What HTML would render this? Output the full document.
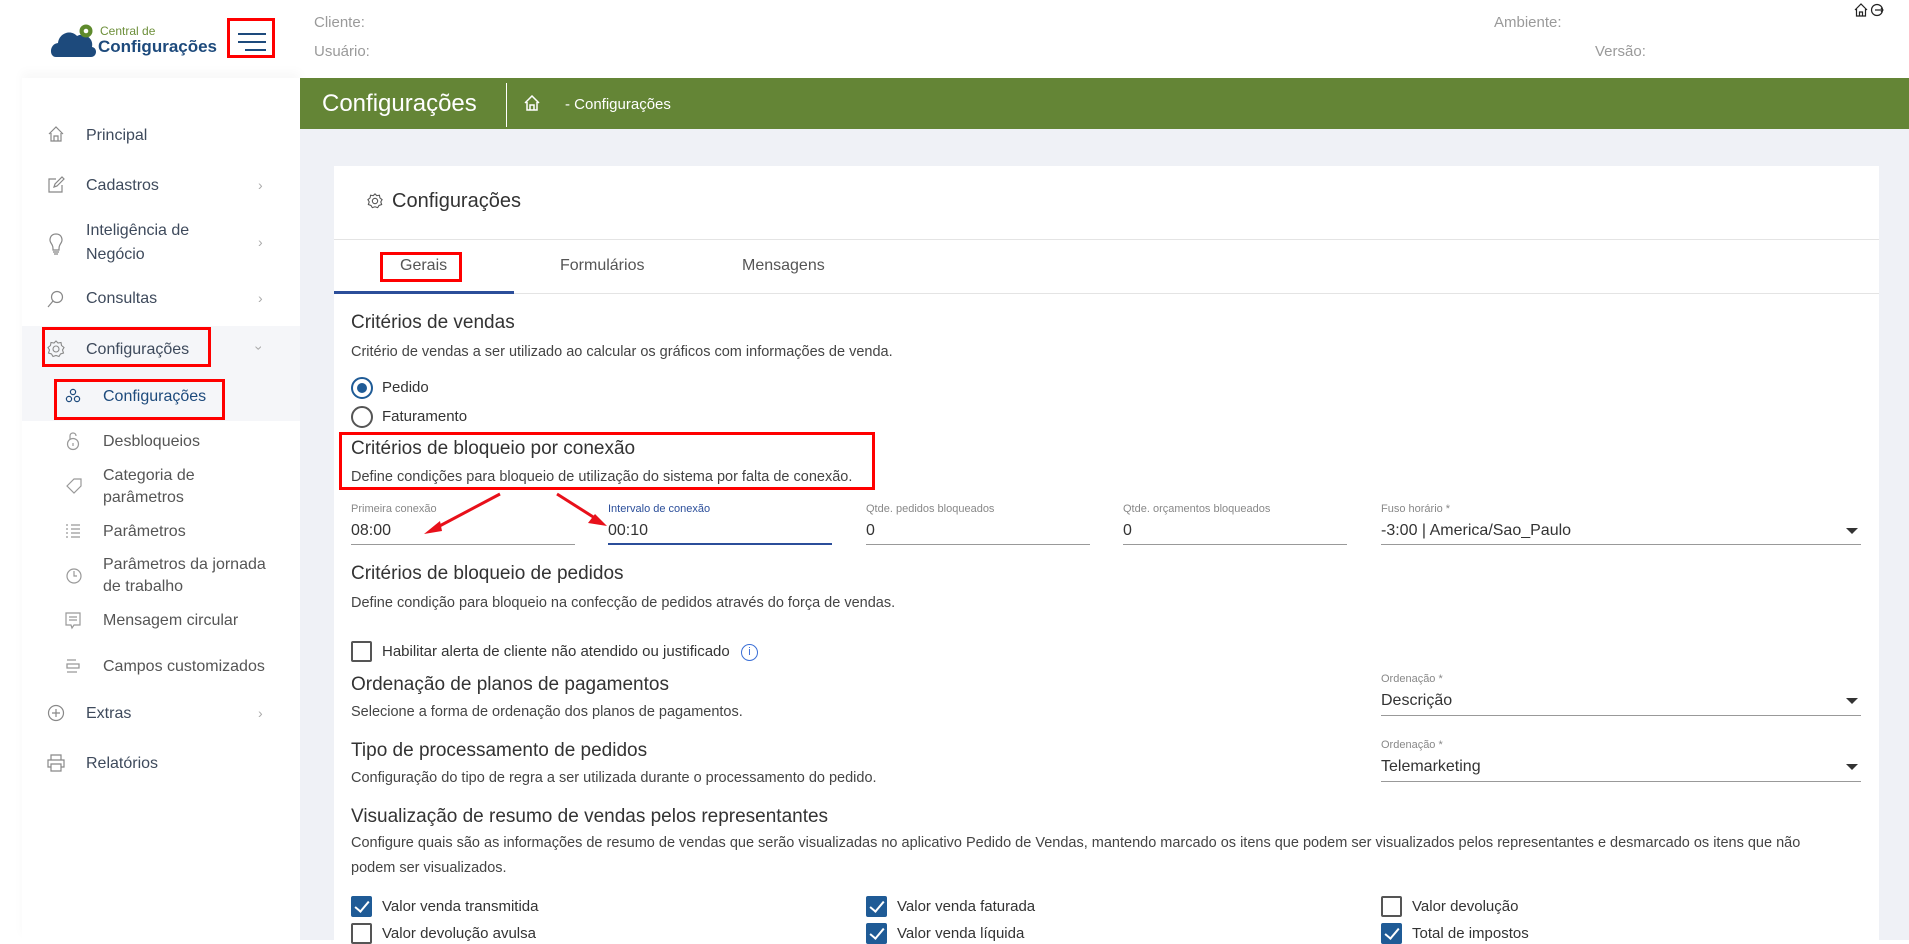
<!DOCTYPE html>
<html><head><meta charset="utf-8"><style>
*{box-sizing:border-box;margin:0;padding:0}
body{width:1909px;height:940px;overflow:hidden;background:#fff;font-family:"Liberation Sans",sans-serif;color:#3c4043;position:relative}
.a{position:absolute;white-space:nowrap}
.hdr{color:#9a9a9a;font-size:15px}
.side{position:absolute;left:22px;top:78px;width:278px;height:862px;background:#fff;box-shadow:0 -6px 10px rgba(0,0,0,.03)}
.si{font-size:16px;color:#3e4a5c}
.chev{color:#aaa;font-size:14px}
.main{position:absolute;left:300px;top:129px;width:1609px;height:811px;background:#eff1f6}
.green{position:absolute;left:300px;top:78px;width:1609px;height:51px;background:#648536}
.card{position:absolute;left:334px;top:166px;width:1545px;height:774px;background:#fff}
.t{font-size:19px;color:#333}
.d{font-size:14.5px;color:#444}
.lbl{font-size:11px;color:#888}
.val{font-size:16px;color:#333}
.line{position:absolute;height:1px;background:#999}
.red{position:absolute;border:3px solid #f00}
.cb{position:absolute;width:21px;height:21px;border:2px solid #555;border-radius:2px;background:#fff}
.cb.on{background:#1f5b96;border-color:#1f5b96}
.cb.on:after{content:"";position:absolute;left:5px;top:0px;width:6px;height:12px;border:solid #fff;border-width:0 2.5px 2.5px 0;transform:rotate(40deg)}
.cbl{font-size:15px;color:#333}
.arr{position:absolute;width:0;height:0;border-left:6px solid transparent;border-right:6px solid transparent;border-top:6px solid #333}
</style></head><body>
<svg class="a" style="left:49px;top:22px" width="50" height="36" viewBox="0 0 50 36"><path d="M7 35 C0 35 0 22 9 21 C10 11 22 7 28 14 C35 10 45 16 43 25 C49 26 48 35 42 35Z" fill="#1d4a7c"/><circle cx="37" cy="9" r="6.5" fill="#5e8a2c"/><circle cx="37" cy="9" r="2.3" fill="#fff"/></svg>
<div class="a" style="left:100px;top:24px;font-size:12px;color:#6d8f3a">Central de</div>
<div class="a" style="left:98px;top:37px;font-size:17px;font-weight:bold;color:#1d4a7c">Configurações</div>
<div class="red" style="left:227px;top:18px;width:48px;height:40px"></div>
<div class="a" style="left:238px;top:33px;width:28px;height:1.5px;background:#1d4a7c"></div>
<div class="a" style="left:238px;top:41px;width:28px;height:1.5px;background:#1d4a7c"></div>
<div class="a" style="left:245px;top:49px;width:21px;height:1.5px;background:#1d4a7c"></div>
<div class="a hdr" style="left:314px;top:14px">Cliente:</div>
<div class="a hdr" style="left:314px;top:43px">Usuário:</div>
<div class="a hdr" style="left:1494px;top:14px">Ambiente:</div>
<div class="a hdr" style="left:1595px;top:43px">Versão:</div>
<svg class="a" style="left:1853px;top:2px" width="34" height="16" viewBox="0 0 34 16"><path d="M2 8 L8 2 L14 8 M3.5 7 V14 H12.5 V7 M6.5 14 V10 H9.5 V14" fill="none" stroke="#222" stroke-width="1.2"/><circle cx="24" cy="8" r="5.5" fill="none" stroke="#222" stroke-width="1.2"/><path d="M22 8 H30 M28 6 L30 8 L28 10" fill="none" stroke="#222" stroke-width="1.2"/></svg>
<div class="side"></div>
<div class="a" style="left:22px;top:326px;width:278px;height:95px;background:#f5f6f9"></div>
<svg class="a" style="left:47px;top:125px" width="18" height="18" viewBox="0 0 18 18"><path d="M2 9 L9 2 L16 9 M4 8 V16 H14 V8 M7 16 V11 H11 V16" fill="none" stroke="#888" stroke-width="1.2"/></svg>
<div class="a si" style="left:86px;top:127px">Principal</div>
<svg class="a" style="left:47px;top:176px" width="18" height="18" viewBox="0 0 18 18"><path d="M9 3 H2 V16 H15 V9 M7 11 L8 8 L15 1 L17 3 L10 10Z" fill="none" stroke="#888" stroke-width="1.2"/></svg>
<div class="a si" style="left:86px;top:177px">Cadastros</div><div class="a chev" style="left:258px;top:177px">›</div>
<svg class="a" style="left:47px;top:232px" width="18" height="24" viewBox="0 0 18 24"><path d="M9 2 C3 2 2 8 4 11 C6 14 6 15 6 18 H12 C12 15 12 14 14 11 C16 8 15 2 9 2Z M6 20 H12 M7 22 H11" fill="none" stroke="#888" stroke-width="1.2"/></svg>
<div class="a si" style="left:86px;top:222px">Inteligência de</div>
<div class="a si" style="left:86px;top:246px">Negócio</div><div class="a chev" style="left:258px;top:234px">›</div>
<svg class="a" style="left:47px;top:290px" width="18" height="18" viewBox="0 0 18 18"><circle cx="10" cy="7" r="5.5" fill="none" stroke="#888" stroke-width="1.2"/><path d="M6 11 L1 17" stroke="#888" stroke-width="1.2"/></svg>
<div class="a si" style="left:86px;top:290px">Consultas</div><div class="a chev" style="left:258px;top:290px">›</div>
<div class="red" style="left:42px;top:327px;width:169px;height:40px"></div>
<svg class="a" style="left:47px;top:340px" width="18" height="18" viewBox="0 0 18 18"><circle cx="9" cy="9" r="3" fill="none" stroke="#888" stroke-width="1.1"/><path d="M9 1 L11 3 L14 2.5 L14.5 5.5 L17 7.5 L15.5 10 L16.5 13 L13.5 14 L12 16.5 L9 15.5 L6 16.5 L4.5 14 L1.5 13 L2.5 10 L1 7.5 L3.5 5.5 L4 2.5 L7 3Z" fill="none" stroke="#888" stroke-width="1.1"/></svg>
<div class="a si" style="left:86px;top:341px">Configurações</div><div class="a chev" style="left:257px;top:340px;transform:rotate(90deg)">›</div>
<div class="red" style="left:54px;top:379px;width:171px;height:41px"></div>
<svg class="a" style="left:65px;top:387px" width="16" height="18" viewBox="0 0 16 18"><circle cx="8" cy="5" r="2.6" fill="none" stroke="#1d4a7c" stroke-width="1.2"/><circle cx="4" cy="12" r="2.6" fill="none" stroke="#1d4a7c" stroke-width="1.2"/><circle cx="12" cy="12" r="2.6" fill="none" stroke="#1d4a7c" stroke-width="1.2"/></svg>
<div class="a si" style="left:103px;top:388px;color:#1d4a7c">Configurações</div>
<svg class="a" style="left:65px;top:431px" width="16" height="20" viewBox="0 0 16 20"><path d="M5 8 V5 C5 1 11 1 11 5" fill="none" stroke="#999" stroke-width="1.2"/><circle cx="8" cy="13" r="5.5" fill="none" stroke="#999" stroke-width="1.2"/><path d="M8 12 V15" stroke="#999" stroke-width="1.2"/></svg>
<div class="a si" style="left:103px;top:433px;color:#555">Desbloqueios</div>
<svg class="a" style="left:65px;top:477px" width="18" height="18" viewBox="0 0 18 18"><path d="M2 9 L9 2 H16 V9 L9 16Z" fill="none" stroke="#999" stroke-width="1.2"/></svg>
<div class="a si" style="left:103px;top:467px;color:#555">Categoria de</div>
<div class="a si" style="left:103px;top:489px;color:#555">parâmetros</div>
<svg class="a" style="left:65px;top:523px" width="16" height="16" viewBox="0 0 16 16"><path d="M1 2 H3 M6 2 H15 M1 6 H3 M6 6 H15 M1 10 H3 M6 10 H15 M1 14 H3 M6 14 H15" stroke="#999" stroke-width="1.3"/></svg>
<div class="a si" style="left:103px;top:523px;color:#555">Parâmetros</div>
<svg class="a" style="left:65px;top:567px" width="18" height="18" viewBox="0 0 18 18"><circle cx="9" cy="9" r="7" fill="none" stroke="#999" stroke-width="1.2"/><path d="M9 4 V9 H12" fill="none" stroke="#999" stroke-width="1.2"/></svg>
<div class="a si" style="left:103px;top:556px;color:#555">Parâmetros da jornada</div>
<div class="a si" style="left:103px;top:578px;color:#555">de trabalho</div>
<svg class="a" style="left:65px;top:612px" width="16" height="18" viewBox="0 0 16 18"><path d="M1 1 H15 V13 H9 L7 16 L6 13 H1Z M4 5 H12 M4 8 H12" fill="none" stroke="#999" stroke-width="1.2"/></svg>
<div class="a si" style="left:103px;top:612px;color:#555">Mensagem circular</div>
<svg class="a" style="left:65px;top:658px" width="16" height="18" viewBox="0 0 16 18"><path d="M2 2 H11 M2 6 H14 V10 H2Z M2 14 H12" fill="none" stroke="#999" stroke-width="1.3"/></svg>
<div class="a si" style="left:103px;top:658px;color:#555">Campos customizados</div>
<svg class="a" style="left:47px;top:704px" width="18" height="18" viewBox="0 0 18 18"><circle cx="9" cy="9" r="7.5" fill="none" stroke="#888" stroke-width="1.2"/><path d="M9 5 V13 M5 9 H13" stroke="#888" stroke-width="1.2"/></svg>
<div class="a si" style="left:86px;top:705px">Extras</div><div class="a chev" style="left:258px;top:705px">›</div>
<svg class="a" style="left:47px;top:754px" width="18" height="18" viewBox="0 0 18 18"><path d="M4 6 V1 H14 V6 M4 13 H1 V6 H17 V13 H14 M4 10 H14 V17 H4Z" fill="none" stroke="#888" stroke-width="1.2"/></svg>
<div class="a si" style="left:86px;top:755px">Relatórios</div>
<div class="main"></div>
<div class="green"></div>
<div class="a" style="left:322px;top:90px;font-size:24px;color:#fff">Configurações</div>
<div class="a" style="left:506px;top:83px;width:1px;height:44px;background:#fff"></div>
<svg class="a" style="left:524px;top:95px" width="16" height="16" viewBox="0 0 16 16"><path d="M1 8 L8 1 L15 8 M3 7 V15 H13 V7 M6 15 V10 H10 V15" fill="none" stroke="#fff" stroke-width="1.5"/></svg>
<div class="a" style="left:565px;top:96px;font-size:15px;color:#fff">- Configurações</div>
<div class="card"></div>
<svg class="a" style="left:367px;top:193px" width="16" height="16" viewBox="0 0 18 18"><circle cx="9" cy="9" r="3" fill="none" stroke="#555" stroke-width="1.2"/><path d="M9 1 L11 3 L14 2.5 L14.5 5.5 L17 7.5 L15.5 10 L16.5 13 L13.5 14 L12 16.5 L9 15.5 L6 16.5 L4.5 14 L1.5 13 L2.5 10 L1 7.5 L3.5 5.5 L4 2.5 L7 3Z" fill="none" stroke="#555" stroke-width="1.2"/></svg>
<div class="a" style="left:392px;top:190px;font-size:20px;color:#333">Configurações</div>
<div class="a" style="left:334px;top:239px;width:1545px;height:1px;background:#e4e4e4"></div>
<div class="a" style="left:334px;top:293px;width:1545px;height:1px;background:#e4e4e4"></div>
<div class="a" style="left:334px;top:291px;width:180px;height:3px;background:#2b4e9a"></div>
<div class="red" style="left:380px;top:252px;width:82px;height:30px"></div>
<div class="a" style="left:400px;top:257px;font-size:16px;color:#555">Gerais</div>
<div class="a" style="left:560px;top:257px;font-size:16px;color:#555">Formulários</div>
<div class="a" style="left:742px;top:257px;font-size:16px;color:#555">Mensagens</div>
<div class="a t" style="left:351px;top:312px">Critérios de vendas</div>
<div class="a d" style="left:351px;top:344px">Critério de vendas a ser utilizado ao calcular os gráficos com informações de venda.</div>
<div class="a" style="left:351px;top:377px;width:22px;height:22px;border:2px solid #1f5b96;border-radius:50%"></div>
<div class="a" style="left:357px;top:383px;width:10px;height:10px;background:#1f5b96;border-radius:50%"></div>
<div class="a cbl" style="left:382px;top:379px">Pedido</div>
<div class="a" style="left:351px;top:406px;width:22px;height:22px;border:2px solid #555;border-radius:50%"></div>
<div class="a cbl" style="left:382px;top:408px">Faturamento</div>
<div class="red" style="left:339px;top:432px;width:536px;height:58px"></div>
<div class="a t" style="left:351px;top:438px">Critérios de bloqueio por conexão</div>
<div class="a d" style="left:351px;top:469px">Define condições para bloqueio de utilização do sistema por falta de conexão.</div>
<svg class="a" style="left:420px;top:492px" width="190" height="45" viewBox="0 0 190 45"><path d="M80 2 L12 38" stroke="#e8101a" stroke-width="3"/><path d="M4 42 L20 29 L22 39Z" fill="#e8101a"/><path d="M137 2 L178 28" stroke="#e8101a" stroke-width="3"/><path d="M187 34 L168 31 L175 22Z" fill="#e8101a"/></svg>
<div class="a lbl" style="left:351px;top:503px">Primeira conexão</div>
<div class="a val" style="left:351px;top:522px">08:00</div>
<div class="line" style="left:351px;top:544px;width:224px"></div>
<div class="a lbl" style="left:608px;top:503px;color:#2b4e9a">Intervalo de conexão</div>
<div class="a val" style="left:608px;top:522px">00:10</div>
<div class="line" style="left:608px;top:543px;width:224px;height:2px;background:#2b4e9a"></div>
<div class="a lbl" style="left:866px;top:503px">Qtde. pedidos bloqueados</div>
<div class="a val" style="left:866px;top:522px">0</div>
<div class="line" style="left:866px;top:544px;width:224px"></div>
<div class="a lbl" style="left:1123px;top:503px">Qtde. orçamentos bloqueados</div>
<div class="a val" style="left:1123px;top:522px">0</div>
<div class="line" style="left:1123px;top:544px;width:224px"></div>
<div class="a lbl" style="left:1381px;top:503px">Fuso horário *</div>
<div class="a val" style="left:1381px;top:522px">-3:00 | America/Sao_Paulo</div>
<div class="arr" style="left:1846px;top:528px"></div>
<div class="line" style="left:1381px;top:544px;width:480px"></div>
<div class="a t" style="left:351px;top:563px">Critérios de bloqueio de pedidos</div>
<div class="a d" style="left:351px;top:595px">Define condição para bloqueio na confecção de pedidos através do força de vendas.</div>
<div class="cb" style="left:351px;top:641px"></div>
<div class="a cbl" style="left:382px;top:643px">Habilitar alerta de cliente não atendido ou justificado</div>
<div class="a" style="left:741px;top:644px;width:17px;height:17px;border:1.5px solid #3b6fd6;border-radius:50%;color:#3b6fd6;font-size:11px;text-align:center;line-height:14px">i</div>
<div class="a t" style="left:351px;top:674px">Ordenação de planos de pagamentos</div>
<div class="a d" style="left:351px;top:704px">Selecione a forma de ordenação dos planos de pagamentos.</div>
<div class="a lbl" style="left:1381px;top:673px">Ordenação *</div>
<div class="a val" style="left:1381px;top:692px">Descrição</div>
<div class="arr" style="left:1846px;top:698px"></div>
<div class="line" style="left:1381px;top:715px;width:480px"></div>
<div class="a t" style="left:351px;top:740px">Tipo de processamento de pedidos</div>
<div class="a d" style="left:351px;top:770px">Configuração do tipo de regra a ser utilizada durante o processamento do pedido.</div>
<div class="a lbl" style="left:1381px;top:739px">Ordenação *</div>
<div class="a val" style="left:1381px;top:758px">Telemarketing</div>
<div class="arr" style="left:1846px;top:764px"></div>
<div class="line" style="left:1381px;top:781px;width:480px"></div>
<div class="a t" style="left:351px;top:806px">Visualização de resumo de vendas pelos representantes</div>
<div class="a d" style="left:351px;top:835px">Configure quais são as informações de resumo de vendas que serão visualizadas no aplicativo Pedido de Vendas, mantendo marcado os itens que podem ser visualizados pelos representantes e desmarcado os itens que não</div>
<div class="a d" style="left:351px;top:860px">podem ser visualizados.</div>
<div class="cb on" style="left:351px;top:896px"></div><div class="a cbl" style="left:382px;top:898px">Valor venda transmitida</div>
<div class="cb" style="left:351px;top:923px"></div><div class="a cbl" style="left:382px;top:925px">Valor devolução avulsa</div>
<div class="cb on" style="left:866px;top:896px"></div><div class="a cbl" style="left:897px;top:898px">Valor venda faturada</div>
<div class="cb on" style="left:866px;top:923px"></div><div class="a cbl" style="left:897px;top:925px">Valor venda líquida</div>
<div class="cb" style="left:1381px;top:896px"></div><div class="a cbl" style="left:1412px;top:898px">Valor devolução</div>
<div class="cb on" style="left:1381px;top:923px"></div><div class="a cbl" style="left:1412px;top:925px">Total de impostos</div>
</body></html>
